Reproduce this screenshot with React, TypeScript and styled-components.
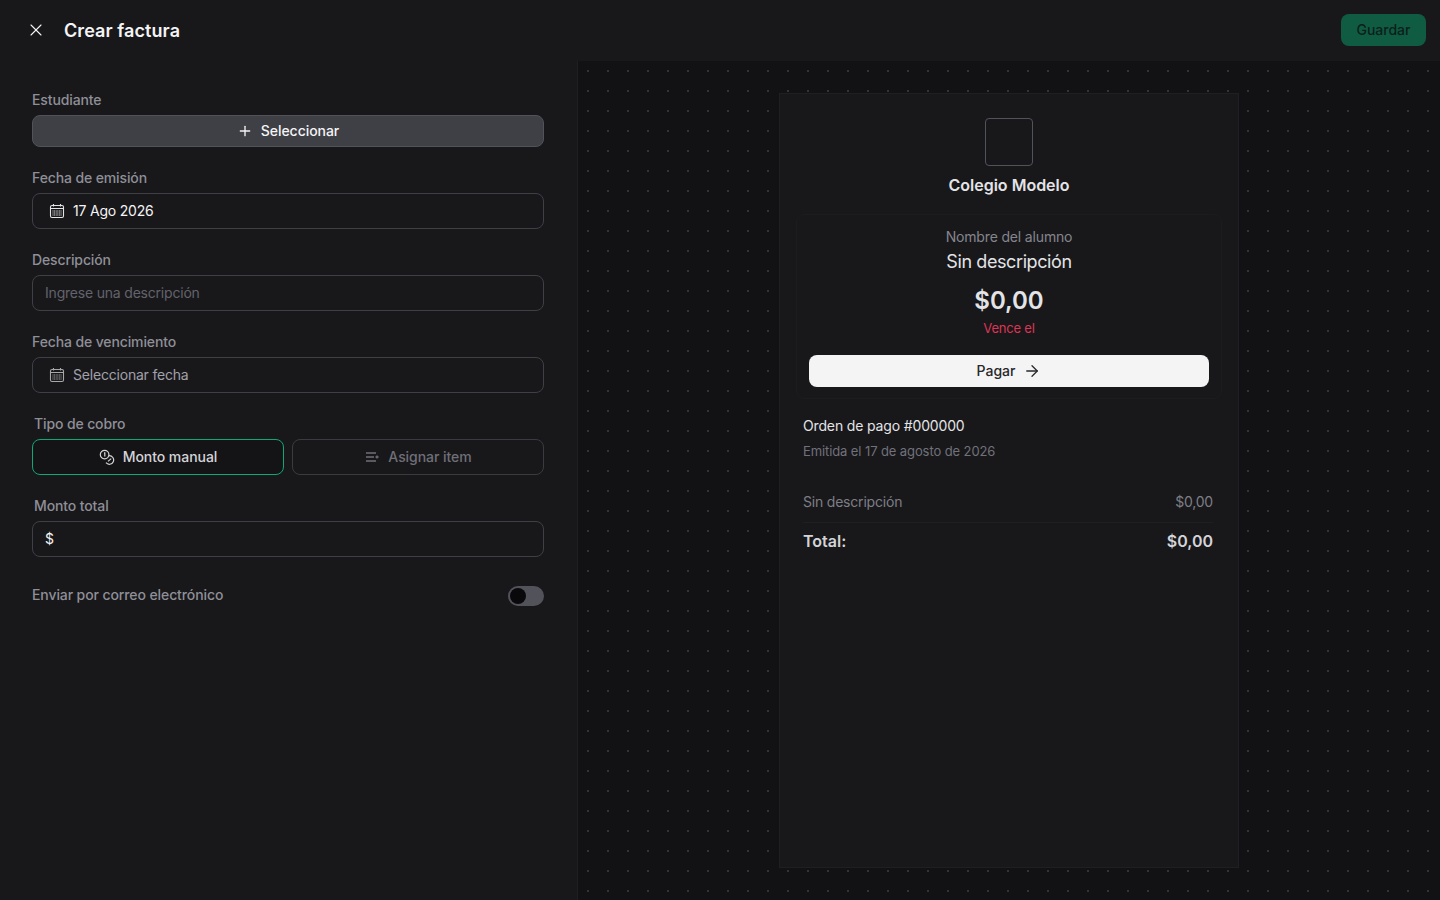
import { ReactNode } from "react";
import styled, { createGlobalStyle } from "styled-components";
import { ArrowRight, Plus, X } from "lucide-react";

const GlobalStyle = createGlobalStyle`
  html, body {
    margin: 0;
    padding: 0;
    height: 100%;
    background: #18181b;
    font-family: Inter, "Liberation Sans", sans-serif;
    overflow: hidden;
  }
  * { box-sizing: border-box; }
`;

const CalendarIcon = ({ muted }: { muted?: boolean }) => (
  <svg width="16" height="16" viewBox="0 0 16 16" fill="none" stroke="currentColor" strokeWidth="1.1" style={{ opacity: muted ? 0.7 : 1 }}>
    <rect x="1.5" y="2.5" width="13" height="12" rx="1.5" />
    <path d="M1.5 5.5h13M4.5 1v2.5M11.5 1v2.5" />
    <path d="M3.5 8h9M3.5 10h9M3.5 12h9" strokeDasharray="1 .6" strokeWidth="1" />
  </svg>
);

const CoinsIcon = () => (
  <svg width="16" height="16" viewBox="0 0 16 16" fill="none" stroke="currentColor" strokeWidth="1.2">
    <circle cx="5.6" cy="5.6" r="4.3" />
    <path d="M5 3.8h.8v3.6" />
    <path d="M10 6.7a4.3 4.3 0 1 1-3 7" />
    <path d="M9 12.4 12.2 9.6" />
  </svg>
);

const ListIcon = () => (
  <svg width="16" height="16" viewBox="0 0 16 16" fill="none" stroke="currentColor" strokeWidth="1.3">
    <path d="M2 4h10M2 8h8M2 12h10" />
    <path d="M11.5 8h3M13 6.6v2.8" />
  </svg>
);

const Field = ({ label, inset, children }: { label: string; inset?: boolean; children: ReactNode }) => (
  <FieldBox>
    <Label $inset={inset}>{label}</Label>
    {children}
  </FieldBox>
);

export default function App() {
  return (
    <>
      <GlobalStyle />
      <Page>
        <TopBar>
          <TitleGroup>
            <CloseButton>
              <X size={20} strokeWidth={1.3} />
            </CloseButton>
            <Title>Crear factura</Title>
          </TitleGroup>
          <SaveButton>Guardar</SaveButton>
        </TopBar>
        <Body>
          <FormPanel>
            <Field label="Estudiante">
              <SelectButton>
                <Plus size={16} strokeWidth={2} />
                Seleccionar
              </SelectButton>
            </Field>
            <Field label="Fecha de emisión">
              <InputBox $pad={16}>
                <CalendarIcon />
                <InputValue>17 Ago 2026</InputValue>
              </InputBox>
            </Field>
            <Field label="Descripción">
              <InputBox>
                <Placeholder>Ingrese una descripción</Placeholder>
              </InputBox>
            </Field>
            <Field label="Fecha de vencimiento">
              <InputBox $pad={16}>
                <CalendarIcon muted />
                <InputValue $muted>Seleccionar fecha</InputValue>
              </InputBox>
            </Field>
            <Field label="Tipo de cobro" inset>
              <TypeRow>
                <TypeOption $active>
                  <CoinsIcon />
                  Monto manual
                </TypeOption>
                <TypeOption>
                  <ListIcon />
                  Asignar item
                </TypeOption>
              </TypeRow>
            </Field>
            <Field label="Monto total" inset>
              <InputBox>
                <InputValue>$</InputValue>
              </InputBox>
            </Field>
            <ToggleRow>
              <ToggleLabel>Enviar por correo electrónico</ToggleLabel>
              <Toggle>
                <Thumb />
              </Toggle>
            </ToggleRow>
          </FormPanel>
          <PreviewPanel>
            <Paper>
              <LogoBox />
              <School>Colegio Modelo</School>
              <PayCard>
                <Student>Nombre del alumno</Student>
                <PayDescription>Sin descripción</PayDescription>
                <Amount>$0,00</Amount>
                <Due>Vence el</Due>
                <PayButton>
                  Pagar
                  <ArrowRight size={18} strokeWidth={1.7} />
                </PayButton>
              </PayCard>
              <OrderBlock>
                <OrderNumber>Orden de pago #000000</OrderNumber>
                <Issued>Emitida el 17 de agosto de 2026</Issued>
              </OrderBlock>
              <LineRow>
                <span>Sin descripción</span>
                <span>$0,00</span>
              </LineRow>
              <TotalRow>
                <span>Total:</span>
                <span>$0,00</span>
              </TotalRow>
            </Paper>
          </PreviewPanel>
        </Body>
      </Page>
    </>
  );
}

const Page = styled.div`
  display: flex;
  flex-direction: column;
  width: 1440px;
  height: 900px;
  background: #18181b;
`;

const TopBar = styled.header`
  display: flex;
  align-items: center;
  justify-content: space-between;
  height: 61px;
  padding: 0 14px 1px 26px;
  flex-shrink: 0;
`;

const TitleGroup = styled.div`
  display: flex;
  align-items: center;
  gap: 18px;
`;

const CloseButton = styled.button`
  display: flex;
  padding: 0;
  border: none;
  background: none;
  color: #f4f4f5;
`;

const Title = styled.h1`
  margin: 2px 0 0;
  font-size: 18px;
  line-height: 28px;
  font-weight: 600;
  letter-spacing: 0.08px;
  color: #f4f4f5;
`;

const SaveButton = styled.button`
  width: 85px;
  height: 32px;
  padding: 0 0 2px;
  border: none;
  border-radius: 8px;
  background: #0f5c43;
  color: #0d1f1a;
  font: 500 14px Inter, sans-serif;
`;

const Body = styled.div`
  display: flex;
  flex: 1;
  min-height: 0;
`;

const FormPanel = styled.section`
  display: flex;
  flex-direction: column;
  gap: 21px;
  width: 577px;
  padding: 29px 33px 0 32px;
  flex-shrink: 0;
`;

const FieldBox = styled.div`
  display: flex;
  flex-direction: column;
  gap: 5px;
`;

const Label = styled.label<{ $inset?: boolean }>`
  padding-left: ${(p) => (p.$inset ? 2 : 0)}px;
  font-size: 14px;
  line-height: 20px;
  font-weight: 500;
  letter-spacing: -0.12px;
  color: #8f8f97;
`;

const SelectButton = styled.button`
  display: flex;
  align-items: center;
  justify-content: center;
  gap: 8px;
  height: 32px;
  padding: 0 0 2px;
  border: 1px solid #52525b;
  border-radius: 8px;
  background: #3f3f46;
  color: #f4f4f5;
  font: 500 14px Inter, sans-serif;
  letter-spacing: -0.05px;

  svg {
    margin-top: 2px;
  }
`;

const InputBox = styled.div<{ $pad?: number }>`
  display: flex;
  align-items: center;
  gap: 8px;
  height: 36px;
  padding: 0 12px 0 ${(p) => p.$pad ?? 12}px;
  border: 1px solid #3f3f46;
  border-radius: 8px;
  color: #e4e4e7;
`;

const InputValue = styled.span<{ $muted?: boolean }>`
  margin-top: -2px;
  font-size: 14px;
  letter-spacing: -0.2px;
  color: ${(p) => (p.$muted ? "#a1a1aa" : "#f4f4f5")};
`;

const Placeholder = styled.span`
  margin-top: -2px;
  font-size: 14px;
  letter-spacing: -0.2px;
  color: #63636b;
`;

const TypeRow = styled.div`
  display: grid;
  grid-template-columns: 1fr 1fr;
  gap: 8px;
`;

const TypeOption = styled.button<{ $active?: boolean }>`
  display: flex;
  align-items: center;
  justify-content: center;
  gap: 8px;
  height: 36px;
  padding: 0 0 2px;
  border: 1px solid ${(p) => (p.$active ? "#10a778" : "#3a3a40")};
  border-radius: 8px;
  background: ${(p) => (p.$active ? "#141417" : "transparent")};
  color: ${(p) => (p.$active ? "#d4d4d8" : "#6f6f77")};
  font: 500 14px Inter, sans-serif;
  letter-spacing: -0.05px;

  svg {
    margin-top: 2px;
  }
`;

const ToggleRow = styled.div`
  display: flex;
  align-items: center;
  justify-content: space-between;
  height: 20px;
  margin-top: 8px;
`;

const ToggleLabel = styled.span`
  margin-bottom: 3px;
  font-size: 14px;
  line-height: 20px;
  font-weight: 500;
  letter-spacing: -0.1px;
  color: #8f8f97;
`;

const Toggle = styled.div`
  display: flex;
  align-items: center;
  width: 36px;
  height: 20px;
  padding: 0 2px;
  border-radius: 10px;
  background: #52525b;
`;

const Thumb = styled.div`
  width: 16px;
  height: 16px;
  border-radius: 50%;
  background: #09090b;
`;

const PreviewPanel = styled.section`
  display: flex;
  justify-content: center;
  flex: 1;
  padding: 32px 0 32px;
  border-left: 1px solid #1f1f23;
  background-color: #121214;
  background-image: radial-gradient(circle at 10px 10px, #33333a 1px, transparent 1px);
  background-size: 20px 20px;
`;

const Paper = styled.div`
  display: flex;
  flex-direction: column;
  align-items: center;
  width: 460px;
  height: 775px;
  padding: 24px 16px;
  border: 1px solid #1f1f23;
  background: #18181b;
`;

const LogoBox = styled.div`
  width: 48px;
  height: 48px;
  border: 1px solid #52525b;
  border-radius: 4px;
`;

const School = styled.h2`
  margin: 7px 0 0;
  font-size: 16px;
  line-height: 24px;
  font-weight: 600;
  color: #e4e4e7;
`;

const PayCard = styled.div`
  display: flex;
  flex-direction: column;
  align-items: center;
  align-self: stretch;
  margin-top: 17px;
  padding: 12px 12px 11px;
  border: 1px solid #1c1c1f;
  border-radius: 8px;
`;

const Student = styled.div`
  font-size: 14px;
  line-height: 20px;
  letter-spacing: -0.16px;
  color: #85858d;
`;

const PayDescription = styled.div`
  margin-top: 1px;
  font-size: 18px;
  line-height: 28px;
  letter-spacing: -0.4px;
  color: #e4e4e7;
`;

const Amount = styled.div`
  margin-top: 9px;
  font-size: 24px;
  line-height: 32px;
  font-weight: 600;
  color: #e4e4e7;
`;

const Due = styled.div`
  margin-top: 1px;
  font-size: 13px;
  line-height: 20px;
  letter-spacing: -0.2px;
  color: #dc3553;
`;

const PayButton = styled.button`
  display: flex;
  align-items: center;
  justify-content: center;
  gap: 8px;
  width: 100%;
  height: 32px;
  margin-top: 17px;
  padding: 0 0 2px;
  border: none;
  border-radius: 8px;
  background: #f4f4f5;
  color: #27272a;
  font: 500 14px Inter, sans-serif;

  svg {
    margin-top: 2px;
  }
`;

const OrderBlock = styled.div`
  display: flex;
  flex-direction: column;
  align-self: stretch;
  gap: 5px;
  margin-top: 17px;
  padding: 0 9px 0 7px;
`;

const OrderNumber = styled.div`
  font-size: 14px;
  line-height: 20px;
  letter-spacing: -0.15px;
  color: #e4e4e7;
`;

const Issued = styled.div`
  font-size: 13px;
  line-height: 20px;
  letter-spacing: -0.1px;
  color: #71717a;
`;

const LineRow = styled.div`
  display: flex;
  justify-content: space-between;
  align-self: stretch;
  margin: 31px 9px 0 7px;
  padding-bottom: 10px;
  border-bottom: 1px solid #1f1f23;
  font-size: 14px;
  line-height: 20px;
  letter-spacing: -0.2px;
  color: #7e7e86;
`;

const TotalRow = styled.div`
  display: flex;
  justify-content: space-between;
  align-self: stretch;
  margin: 6px 9px 0 7px;
  font-size: 16px;
  line-height: 24px;
  font-weight: 600;
  color: #d4d4d8;
`;
